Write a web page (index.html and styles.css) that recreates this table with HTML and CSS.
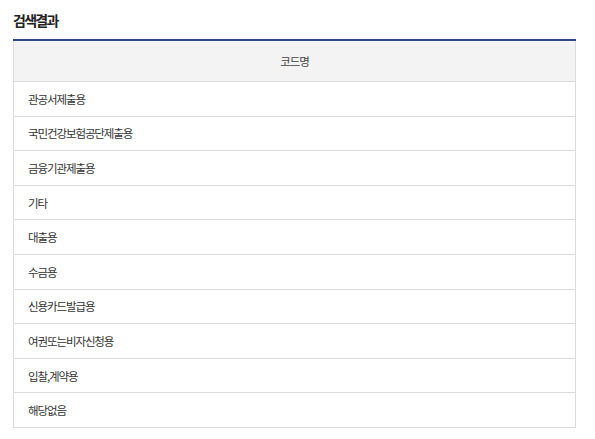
FILE: index.html
```html
<!DOCTYPE html>
<html lang="ko">
<head>
<meta charset="utf-8">
<link rel="stylesheet" href="styles.css">
</head>
<body>
<div class="wrap">
  <h2 class="title">검색결과</h2>
  <table class="result">
    <thead>
      <tr><th>코드명</th></tr>
    </thead>
    <tbody>
      <tr><td>관공서제출용</td></tr>
      <tr><td>국민건강보험공단제출용</td></tr>
      <tr><td>금융기관제출용</td></tr>
      <tr><td>기타</td></tr>
      <tr><td>대출용</td></tr>
      <tr><td>수금용</td></tr>
      <tr><td>신용카드발급용</td></tr>
      <tr><td>여권또는비자신청용</td></tr>
      <tr><td>입찰,계약용</td></tr>
      <tr><td>해당없음</td></tr>
    </tbody>
  </table>
</div>
</body>
</html>
```
FILE: styles.css
```css
html, body {
  margin: 0;
  padding: 0;
  background: #fff;
}
body {
  font-family: "Noto Sans CJK KR", "Noto Sans", sans-serif;
  color: #333;
}
.wrap {
  padding: 9px 0 0 13px;
  width: 563px;
}
.title {
  margin: 0 0 8px 0;
  font-size: 14px;
  line-height: 22px;
  font-weight: 700;
  color: #222;
  letter-spacing: -1.7px;
}
.result {
  width: 100%;
  border-collapse: collapse;
  border-top: 2px solid #2d4a86;
  font-size: 11.5px;
  letter-spacing: -1.1px;
}
.result th {
  background: #f3f3f3;
  font-weight: 400;
  color: #444;
  height: 40px;
  padding: 0;
  text-align: center;
  border: 1px solid #dcdcdc;
  border-top: 0;
}
.result td {
  padding: 0 0 0 14px;
  height: 33.6px;
  text-align: left;
  border: 1px solid #dcdcdc;
  color: #333;
}
```
